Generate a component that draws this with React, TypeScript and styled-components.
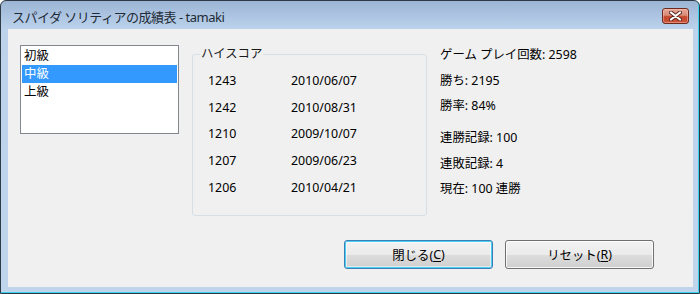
import React from "react";
import styled, { createGlobalStyle } from "styled-components";

const Global = createGlobalStyle`
  html, body { margin: 0; padding: 0; background: #ffffff; }
  body { font-family: "Noto Sans", "Noto Sans CJK JP", sans-serif; }
`;

const Window = styled.div`
  box-sizing: border-box;
  width: 700px;
  height: 294px;
  display: flex;
  flex-direction: column;
  border: 1px solid #2e3a46;
  border-radius: 6px 6px 0 0;
  background: linear-gradient(#9cb5d4 0px, #b0c8e4 18px, #bdd3ec 29px, #bfd5ec 100%);
  box-shadow: inset -1px -1px 0 #39d2ee;
  overflow: hidden;
`;

const TitleBar = styled.div`
  height: 28px;
  flex: none;
  display: flex;
  align-items: center;
  padding: 0 10px 0 11px;
  box-sizing: border-box;
`;

const TitleText = styled.div`
  flex: 1;
  font-size: 13px;
  color: #1e2a36;
  letter-spacing: -0.5px;
  white-space: nowrap;
  padding-top: 3px;
`;

const CloseBtn = styled.div`
  width: 27px;
  height: 16px;
  margin-top: 1px;
  box-sizing: border-box;
  border: 1px solid #6e2a1e;
  border-radius: 3px;
  background: linear-gradient(#e6a898 0%, #d98a76 45%, #c5462c 55%, #c9543a 100%);
  box-shadow: inset 0 0 0 1px rgba(255, 200, 190, 0.45);
  display: flex;
  align-items: center;
  justify-content: center;
`;

const Frame = styled.div`
  flex: 1;
  display: flex;
  padding: 0 6px 6px 7px;
  box-sizing: border-box;
`;

const Client = styled.div`
  flex: 1;
  background: #f0f0f0;
  display: flex;
  flex-direction: column;
  padding: 16px 0 0 12px;
  font-size: 12.4px;
  color: #000;
`;

const TopRow = styled.div`
  display: flex;
  align-items: flex-start;
`;

const ListBox = styled.div`
  width: 159px;
  height: 89px;
  box-sizing: border-box;
  border: 1px solid #828790;
  background: #ffffff;
  padding: 1px;
  display: flex;
  flex-direction: column;
`;

const ListItem = styled.div<{ $selected?: boolean }>`
  height: 18px;
  line-height: 18px;
  padding-left: 2px;
  background: ${(p) => (p.$selected ? "#3399ff" : "transparent")};
  color: ${(p) => (p.$selected ? "#ffffff" : "#000000")};
`;

const Group = styled.fieldset`
  margin: 2px 0 0 13px;
  width: 235px;
  box-sizing: border-box;
  height: 169px;
  border: 1px solid #d5dfe5;
  border-radius: 3px;
  padding: 6px 0 0 15px;
  min-width: 0;
`;

const Legend = styled.legend`
  padding: 0 1px;
  margin-left: -8px;
  line-height: 14px;
  color: #1a1a1a;
`;

const ScoreRow = styled.div`
  display: flex;
  height: 26.75px;
  align-items: center;
`;

const Score = styled.div`
  width: 83px;
`;

const Stats = styled.div`
  margin: -3px 0 0 13px;
  display: flex;
  flex-direction: column;
`;

const StatLine = styled.div<{ $gap?: boolean }>`
  line-height: 25.5px;
  margin-top: ${(p) => (p.$gap ? "6.5px" : "0")};
  white-space: nowrap;
`;

const ButtonRow = styled.div`
  margin-top: auto;
  display: flex;
  justify-content: flex-end;
  gap: 12px;
  padding: 0 39px 18px 0;
`;

const Button = styled.div<{ $default?: boolean }>`
  width: 149px;
  height: 29px;
  box-sizing: border-box;
  border: 1px solid ${(p) => (p.$default ? "#3c7fb1" : "#707070")};
  border-radius: 3px;
  background: linear-gradient(#f2f2f2 0%, #ebebeb 50%, #dddddd 51%, #cfcfcf 100%);
  box-shadow: ${(p) =>
    p.$default ? "inset 0 0 0 1px #48d0f8, inset 0 0 0 2px rgba(255,255,255,0.5)" : "inset 0 0 0 1px rgba(255,255,255,0.8)"};
  display: flex;
  align-items: center;
  justify-content: center;
  color: #000;
`;

const U = styled.span`
  text-decoration: underline;
  text-underline-offset: 2px;
`;

const scores = [
  ["1243", "2010/06/07"],
  ["1242", "2010/08/31"],
  ["1210", "2009/10/07"],
  ["1207", "2009/06/23"],
  ["1206", "2010/04/21"],
];

export default function App() {
  return (
    <>
      <Global />
      <Window>
        <TitleBar>
          <TitleText>スパイダ ソリティアの成績表 - tamaki</TitleText>
          <CloseBtn>
            <svg width="13" height="10" viewBox="0 0 13 10">
              <path
                d="M2 1.5 L11 8.5 M11 1.5 L2 8.5"
                stroke="#5a2a22"
                strokeWidth="4"
                strokeLinecap="round"
              />
              <path
                d="M2 1.5 L11 8.5 M11 1.5 L2 8.5"
                stroke="#ffffff"
                strokeWidth="2.2"
                strokeLinecap="round"
              />
            </svg>
          </CloseBtn>
        </TitleBar>
        <Frame>
          <Client>
            <TopRow>
              <ListBox>
                <ListItem>初級</ListItem>
                <ListItem $selected>中級</ListItem>
                <ListItem>上級</ListItem>
              </ListBox>
              <Group>
                <Legend>ハイスコア</Legend>
                {scores.map(([s, d]) => (
                  <ScoreRow key={s}>
                    <Score>{s}</Score>
                    <div>{d}</div>
                  </ScoreRow>
                ))}
              </Group>
              <Stats>
                <StatLine>ゲーム プレイ回数: 2598</StatLine>
                <StatLine>勝ち: 2195</StatLine>
                <StatLine>勝率: 84%</StatLine>
                <StatLine $gap>連勝記録: 100</StatLine>
                <StatLine>連敗記録: 4</StatLine>
                <StatLine>現在: 100 連勝</StatLine>
              </Stats>
            </TopRow>
            <ButtonRow>
              <Button $default>
                閉じる(<U>C</U>)
              </Button>
              <Button>
                リセット(<U>R</U>)
              </Button>
            </ButtonRow>
          </Client>
        </Frame>
      </Window>
    </>
  );
}
